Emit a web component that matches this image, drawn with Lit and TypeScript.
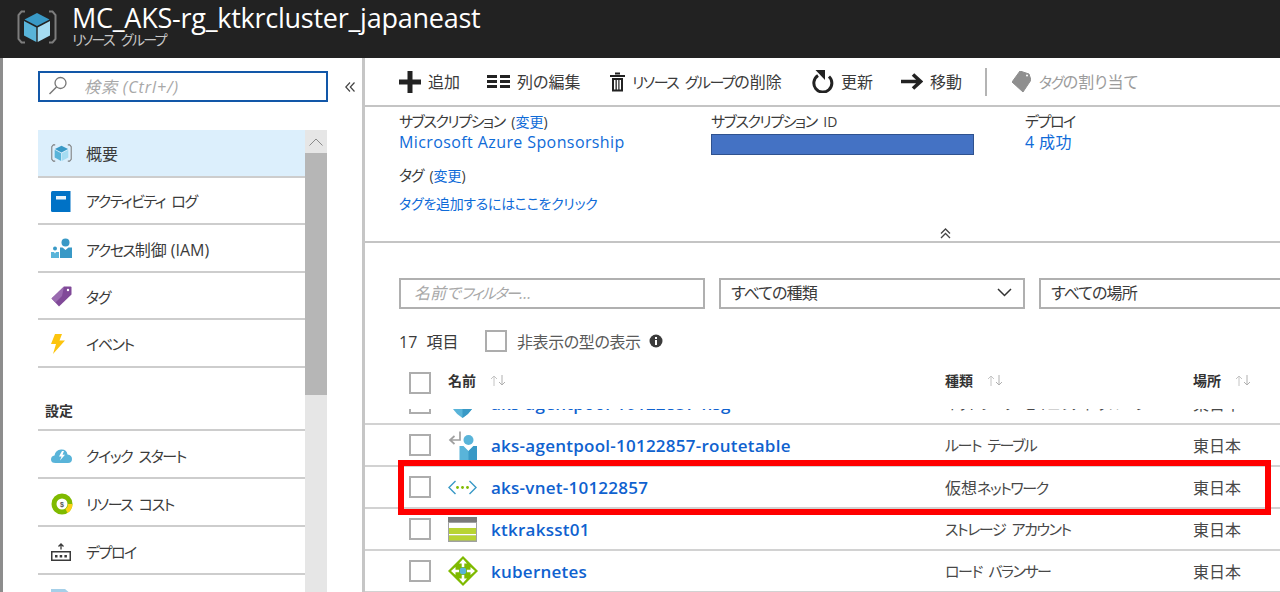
import { LitElement, html, css } from "lit";
import { customElement } from "lit/decorators.js";

const t = (s: string) =>
  s.split(/([\u30A0-\u30FF]+(?: [\u30A0-\u30FF]+)*)/).map((p, i) => (i % 2 ? html`<span class="k">${p}</span>` : p));

const cube = html`<svg viewBox="0 0 40 34" width="100%" height="100%">
  <path d="M8 1.500H4.500L1.500 5V29L4.500 32.500H8" fill="none" stroke="#7d7d7d" stroke-width="2"/>
  <path d="M32 1.500H35.500L38.500 5V29L35.500 32.500H32" fill="none" stroke="#7d7d7d" stroke-width="2"/>
  <path d="M20 3L32.500 9.500L20 16L7.500 9.500Z" fill="#3999c6"/>
  <path d="M7 11L19.300 17.500V32L7 25.500Z" fill="#59b4d9"/>
  <path d="M33 11L20.700 17.500V32L33 25.500Z" fill="#a5dcf2"/>
</svg>`;

const icons: Record<string, unknown> = {
  cube,
  book: html`<svg viewBox="0 0 20 21" width="20" height="21"><path d="M1.500 0H19.500V21H1.500Q0 21 0 19.500V1.500Q0 0 1.500 0Z" fill="#0072c6"/><rect x="5" y="5" width="10" height="3.500" fill="#e8f4fb"/></svg>`,
  iam: html`<svg viewBox="0 0 21 21" width="21" height="21"><circle cx="14.500" cy="4.500" r="4" fill="#3999c6"/><path d="M9 9.500H11.500L14.500 12L17.500 9.500H21V20H9Z" fill="#3999c6"/><circle cx="4" cy="10.500" r="2" fill="#3999c6"/><path d="M0 14H3L4 15.500L5 14H8V20H0Z" fill="#59b4d9"/></svg>`,
  tag: html`<svg viewBox="0 0 21 21" width="21" height="21"><path d="M13 0.500H19.500Q20.500 0.500 20.500 1.500V8.500L8 20.500L0.500 12.500Z" fill="#804998"/><path d="M13 0.500L0.500 12.500L4.500 16.500L11 10Z" fill="#9a6bb0"/><circle cx="17" cy="4" r="1.200" fill="#fff"/></svg>`,
  bolt: html`<svg viewBox="0 0 14 20" width="14" height="20"><path d="M4 0H11L8.500 6.500H14L2 20L5 10H0Z" fill="#fcc40e"/></svg>`,
  cloud: html`<svg viewBox="0 0 21 15" width="21" height="15"><path d="M4.500 15Q0 15 0 11.500Q0 8 3.500 7.500Q4.500 2 10 1.500Q15.500 1 16.500 6.500Q21 7 21 11Q21 15 17 15Z" fill="#59b4d9"/><path d="M11 3L8 8.500H10.500L9 12.500L14 6.800H11.500L13 3Z" fill="#fff"/></svg>`,
  cost: html`<svg viewBox="0 0 22 22" width="22" height="22"><circle cx="11" cy="11" r="8" fill="none" stroke="#7fba00" stroke-width="5"/><path d="M21.500 11A10.500 10.500 0 0 1 16.500 20L14.500 16A6 6 0 0 0 17 11Z" fill="#fcd116"/><text x="11" y="13.500" text-anchor="middle" font-size="7" font-weight="700" fill="#555" font-family="Liberation Sans">$</text></svg>`,
  deploy: html`<svg viewBox="0 0 20 18" width="20" height="18"><rect x="0.750" y="8.750" width="18.500" height="8.500" fill="none" stroke="#3a3a3a" stroke-width="1.500"/><rect x="4" y="12" width="2.500" height="2.500" fill="#3a3a3a"/><rect x="8.700" y="12" width="2.500" height="2.500" fill="#3a3a3a"/><rect x="13.400" y="12" width="2.500" height="2.500" fill="#3a3a3a"/><path d="M10 6.500V1M7.500 3.500L10 1L12.500 3.500" fill="none" stroke="#3a3a3a" stroke-width="1.300"/></svg>`,
  file: html`<svg viewBox="0 0 20 21" width="20" height="21"><path d="M0 0H14L20 5V21H0Z" fill="#a5cfe8"/></svg>`,
  plus: html`<svg viewBox="0 0 22 22" width="22" height="22"><path d="M8.500 0H13.500V8.500H22V13.500H13.500V22H8.500V13.500H0V8.500H8.500Z" fill="#222"/></svg>`,
  cols: html`<svg viewBox="0 0 23 13" width="23" height="13"><g fill="#222"><rect width="10" height="3"/><rect y="5" width="10" height="3"/><rect y="10" width="10" height="3"/><rect x="13" width="10" height="3"/><rect x="13" y="5" width="10" height="3"/><rect x="13" y="10" width="10" height="3"/></g></svg>`,
  trash: html`<svg viewBox="0 0 15 20" width="15" height="20"><path d="M5 1.500H10M0 4H15" stroke="#222" stroke-width="2" fill="none"/><path d="M2 6H13V19.500H2Z M4 8V17.500H5.500V8Z M6.800 8V17.500H8.300V8Z M9.500 8V17.500H11V8Z" fill="#222" fill-rule="evenodd"/></svg>`,
  refresh: html`<svg viewBox="0 0 22 23" width="22" height="23"><path d="M17 6.500A9 9 0 1 1 6 5.500" fill="none" stroke="#222" stroke-width="3"/><path d="M3.500 0H13V10Z" fill="#222"/></svg>`,
  arrow: html`<svg viewBox="0 0 22 17" width="22" height="17"><path d="M0 8.500H19M12 1.500L19.500 8.500L12 15.500" fill="none" stroke="#222" stroke-width="3.600"/></svg>`,
  grayTag: html`<svg viewBox="0 0 19 22" width="19" height="22"><path d="M8 0L17 3L19 9L11 21L0 11Z" fill="#8f8f8f" stroke="#8f8f8f" stroke-linejoin="round"/><circle cx="15" cy="4.500" r="1" fill="#fff"/></svg>`,
  shield: html`<svg viewBox="0 0 29 29" width="29" height="29"><path d="M2 0H27V10Q27 21 14.500 29Q2 21 2 10Z" fill="#59b4d9"/><path d="M14.500 0H27V10Q27 21 14.500 29Z" fill="#3999c6"/></svg>`,
  route: html`<svg viewBox="0 0 29 29" width="29" height="29"><path d="M12 0.500V9H2.500M6.500 5L2 9L6.500 13" fill="none" stroke="#a0a0a0" stroke-width="1.700"/><circle cx="20.500" cy="9" r="5" fill="#59b4d9"/><path d="M11.500 15H15.500L20.500 20L25.500 15H29V29H11.500Z" fill="#59b4d9"/><path d="M20.500 20L25.500 15H29V29H20.500Z" fill="#3999c6"/></svg>`,
  vnet: html`<svg viewBox="0 0 29 15" width="29" height="15"><path d="M7.500 1L1 7.500L7.500 14M21.500 1L28 7.500L21.500 14" fill="none" stroke="#3999c6" stroke-width="1.400"/><g fill="#7fba00"><circle cx="9.500" cy="7.500" r="1.400"/><circle cx="14.500" cy="7.500" r="1.400"/><circle cx="19.500" cy="7.500" r="1.400"/></g></svg>`,
  storage: html`<svg viewBox="0 0 29 25" width="29" height="25"><rect width="29" height="25" fill="#a0a1a2"/><rect width="29" height="5" fill="#7a7a7a"/><rect x="1" y="6" width="27" height="5" fill="#fff"/><rect x="1" y="11" width="27" height="6" fill="#b8d432"/><rect x="1" y="17" width="27" height="1.500" fill="#fff"/><rect x="1" y="18.500" width="27" height="5" fill="#b8d432"/></svg>`,
  lb: html`<svg viewBox="0 0 30 30" width="30" height="30"><path d="M15 0L30 15L15 30L0 15Z" fill="#7fba00"/><path d="M15 3L19 7.500H16.300V11H13.700V7.500H11Z M15 27L19 22.500H16.300V19H13.700V22.500H11Z M3 15L7.500 11V13.700H11V16.300H7.500V19Z M27 15L22.500 11V13.700H19V16.300H22.500V19Z" fill="#fff"/><circle cx="15" cy="15" r="3.400" fill="#59b4d9"/></svg>`,
};

const sortArrows = html`<svg class="sort" viewBox="0 0 17 11" width="17" height="11"><path d="M4 11V1M1 4L4 1L7 4" fill="none" stroke="#c4c4c4" stroke-width="1"/><path d="M12 0V10M9 7L12 10L15 7" fill="none" stroke="#b0b0b0" stroke-width="1"/></svg>`;

const nav1 = [
  ["cube", "概要", true],
  ["book", "アクティビティ ログ", false],
  ["iam", "アクセス制御 (IAM)", false],
  ["tag", "タグ", false],
  ["bolt", "イベント", false],
] as const;
const nav2 = [
  ["cloud", "クイック スタート"],
  ["cost", "リソース コスト"],
  ["deploy", "デプロイ"],
  ["file", ""],
] as const;
const tools = [
  ["plus", "追加"],
  ["cols", "列の編集"],
  ["trash", "リソース グループの削除"],
  ["refresh", "更新"],
  ["arrow", "移動"],
] as const;
const rows = [
  ["shield", "aks-agentpool-10122857-nsg", "ネットワーク セキュリティ グループ"],
  ["route", "aks-agentpool-10122857-routetable", "ルート テーブル"],
  ["vnet", "aks-vnet-10122857", "仮想ネットワーク"],
  ["storage", "ktkraksst01", "ストレージ アカウント"],
  ["lb", "kubernetes", "ロード バランサー"],
] as const;

@customElement("app-root")
export class AppRoot extends LitElement {
  static styles = css`
    :host {
      display: block;
      position: relative;
      width: 1280px;
      height: 592px;
      overflow: hidden;
      background: #fff;
      color: #3b3b3b;
      font-family: "Open Sans", "Noto Sans CJK JP", sans-serif;
      font-size: 16px;
      font-feature-settings: "palt";
    }
    * { box-sizing: border-box; }
    svg { display: block; flex: none; }
    a { color: #0f6bd8; text-decoration: none; }
    .k { font-size: 15px; letter-spacing: -1.45px; word-spacing: 4px; }

    .header {
      height: 58px;
      background: #222;
      color: #fff;
      display: flex;
      align-items: flex-start;
      padding: 10px 0 0 17px;
      gap: 15px;
    }
    .logo { width: 40px; height: 34px; }
    .titles { margin-top: -4px; }
    .title { font-size: 27px; line-height: 24px; letter-spacing: -0.25px; }
    .subtitle { font-size: 14px; line-height: 16px; margin-top: 2px; color: #c8c8c8; letter-spacing: -1.7px; word-spacing: 5px; }

    .body { display: flex; height: 534px; }
    .sidebar {
      width: 365px;
      flex: none;
      border-left: 3px solid #8d8d8d;
      border-right: 3px solid #c6c6c6;
      padding: 13px 0 0 35px;
    }
    .searchrow { display: flex; align-items: center; gap: 17px; }
    .search {
      width: 290px;
      height: 31px;
      border: 2px solid #1257a8;
      display: flex;
      align-items: center;
      padding: 0 0 2px 8px;
      gap: 16px;
      font-style: italic;
      color: #a8a8a8;
      letter-spacing: 0.9px;
    }
    .scroll { display: flex; margin-top: 28px; width: 289px; }
    .menu { width: 267px; flex: none; }
    .item {
      height: 47.6px;
      border-bottom: 2px solid #cdcdcd;
      display: flex;
      align-items: center;
      color: #3b3b3b;
      padding-top: 2px;
    }
    .item.sec2 { height: 48px; padding-top: 4px; }
    .item.active { background: #dceffc; padding-top: 1px; }
    .ico { width: 48px; padding-left: 13px; flex: none; display: flex; align-items: center; }
    .ico-cube { width: 21px; height: 18px; }
    .section {
      height: 63px;
      border-bottom: 2px solid #cdcdcd;
      display: flex;
      align-items: flex-end;
      padding: 0 0 9px 7px;
      font-size: 14px;
      font-weight: 700;
      color: #333;
    }
    .bar { width: 22px; flex: none; background: #e6e6e6; height: 462px; }
    .bar-up { height: 23px; display: flex; align-items: center; justify-content: center; }
    .thumb { height: 242px; background: #b6b6b6; }

    .main { flex: 1; min-width: 0; overflow: hidden; }
    .toolbar {
      height: 49px;
      border-bottom: 2px solid #c4c4c4;
      padding-left: 34px;
      display: grid;
      grid-template-columns: 88px 123px 202px 89px 84px 27px auto;
      align-items: center;
    }
    .tool { display: flex; align-items: center; gap: 7px; white-space: nowrap; }
    .tool span { margin-top: -2px; }
    .sep { width: 2px; height: 28px; background: #b4b4b4; }
    .tool.off { color: #9c9c9c; gap: 8px; }

    .essentials {
      height: 136px;
      border-bottom: 2px solid #c4c4c4;
      padding: 4px 0 0 34px;
      font-size: 14px;
    }
    .esgrid { display: grid; grid-template-columns: 312px 314px 1fr; }
    .label { height: 20px; line-height: 20px; white-space: nowrap; word-spacing: 3px; }
    .value { height: 23px; line-height: 22px; font-size: 16px; white-space: nowrap; letter-spacing: 0.4px; }
    .mask { width: 263px; height: 21px; margin-top: 3px; background: #4472c4; border: 1px solid #2f528f; }
    .tagrow { margin-top: 10px; }
    .taglink { margin-top: 9px; height: 20px; line-height: 20px; font-size: 14px; letter-spacing: -0.3px; }
    .chev { margin: 14px 0 0 541px; }

    .filters {
      margin-top: 35px;
      padding-left: 34px;
      display: grid;
      grid-template-columns: 306px 306px 306px;
      gap: 14px;
      width: 1000px;
    }
    .field {
      height: 31px;
      border: 2px solid #b0b0b0;
      display: flex;
      align-items: center;
      justify-content: space-between;
      padding: 0 11px 3px 10px;
      letter-spacing: -0.9px;
    }
    .field.ph { font-style: italic; color: #a8a8a8; padding-left: 13px; letter-spacing: 0; }
    .countrow {
      margin-top: 21px;
      padding-left: 34px;
      display: flex;
      align-items: center;
      height: 22px;
    }
    .count { width: 86px; word-spacing: 5px; }
    .check { width: 22px; height: 22px; border: 2px solid #adadad; background: #fff; flex: none; }
    .hidden-label { margin-left: 10px; color: #5a5a5a; margin-right: 8px; letter-spacing: -0.4px; }
    .thead {
      display: grid;
      grid-template-columns: 39px 497px 248px 1fr;
      margin: 18px 0 0 44px;
      align-items: center;
      height: 22px;
      font-size: 14px;
      font-weight: 700;
      color: #333;
    }
    .th { display: flex; align-items: center; gap: 14px; padding-bottom: 5px; }
    .rows { margin-top: 17px; height: 200px; overflow: hidden; }
    .rows-in { margin-top: -26px; }
    .row {
      display: grid;
      grid-template-columns: 39px 43px 454px 248px 1fr;
      align-items: center;
      height: 42px;
      border-bottom: 2px solid #d2d2d2;
      width: 915px;
      padding-left: 44px;
    }
    .cellico { display: flex; align-items: center; }
    .name { font-size: 17px; font-weight: 600; color: #0f62cf; white-space: nowrap; letter-spacing: 0.25px; }
    .type, .loc { color: #484848; white-space: nowrap; }

    .redbox {
      position: absolute;
      left: 398px;
      top: 460px;
      width: 873px;
      height: 55px;
      border: 6px solid #ff0000;
    }
  `;

  render() {
    return html`
      <div class="header">
        <div class="logo">${cube}</div>
        <div class="titles">
          <div class="title">MC_AKS-rg_ktkrcluster_japaneast</div>
          <div class="subtitle">リソース グループ</div>
        </div>
      </div>
      <div class="body">
        <div class="sidebar">
          <div class="searchrow">
            <div class="search">
              <svg viewBox="0 0 20 20" width="20" height="20"><circle cx="12.500" cy="7" r="5.500" fill="none" stroke="#777" stroke-width="1.300"/><path d="M8.500 11L1.500 18" stroke="#777" stroke-width="1.500"/></svg>
              <span>検索 (Ctrl+/)</span>
            </div>
            <svg viewBox="0 0 10 10" width="10" height="10"><path d="M5 0.500L0.800 5L5 9.500M9.500 0.500L5.300 5L9.500 9.500" fill="none" stroke="#444" stroke-width="1.200"/></svg>
          </div>
          <div class="scroll">
            <div class="menu">
              ${nav1.map(([i, s, a]) => html`<div class="item ${a ? "active" : ""}"><div class="ico">${i === "cube" ? html`<div class="ico-cube">${cube}</div>` : icons[i]}</div><span>${t(s)}</span></div>`)}
              <div class="section">設定</div>
              ${nav2.map(([i, s]) => html`<div class="item sec2"><div class="ico">${icons[i]}</div><span>${t(s)}</span></div>`)}
            </div>
            <div class="bar">
              <div class="bar-up"><svg viewBox="0 0 14 8" width="14" height="8"><path d="M0.500 7.500L7 1L13.500 7.500" fill="none" stroke="#8a8a8a" stroke-width="1"/></svg></div>
              <div class="thumb"></div>
            </div>
          </div>
        </div>
        <div class="main">
          <div class="toolbar">
            ${tools.map(([i, s]) => html`<div class="tool">${icons[i]}<span>${t(s)}</span></div>`)}
            <div class="sep"></div>
            <div class="tool off">${icons.grayTag}<span>${t("タグの割り当て")}</span></div>
          </div>
          <div class="essentials">
            <div class="esgrid">
              <div>
                <div class="label">${t("サブスクリプション")} (<a>変更</a>)</div>
                <div class="value"><a>Microsoft Azure Sponsorship</a></div>
              </div>
              <div>
                <div class="label">${t("サブスクリプション")} ID</div>
                <div class="mask"></div>
              </div>
              <div>
                <div class="label">${t("デプロイ")}</div>
                <div class="value"><a>4 成功</a></div>
              </div>
            </div>
            <div class="label tagrow">${t("タグ")} (<a>変更</a>)</div>
            <div class="taglink"><a>タグを追加するにはここをクリック</a></div>
            <svg class="chev" viewBox="0 0 11 11" width="11" height="11"><path d="M1 5.500L5.500 1L10 5.500M1 10L5.500 5.500L10 10" fill="none" stroke="#444" stroke-width="1.300"/></svg>
          </div>
          <div class="filters">
            <div class="field ph"><span>${t("名前でフィルター")}...</span></div>
            <div class="field"><span>すべての種類</span><svg viewBox="0 0 15 9" width="15" height="9"><path d="M1 1L7.500 7.500L14 1" fill="none" stroke="#333" stroke-width="1.500"/></svg></div>
            <div class="field"><span>すべての場所</span></div>
          </div>
          <div class="countrow">
            <span class="count">17 項目</span>
            <div class="check"></div>
            <span class="hidden-label">非表示の型の表示</span>
            <svg viewBox="0 0 14 14" width="14" height="14"><circle cx="7" cy="7" r="6.500" fill="#3b3b3b"/><rect x="6" y="6" width="2" height="5" fill="#fff"/><rect x="6" y="3" width="2" height="2" fill="#fff"/></svg>
          </div>
          <div class="thead">
            <div class="check"></div>
            <div class="th"><span>名前</span>${sortArrows}</div>
            <div class="th"><span>種類</span>${sortArrows}</div>
            <div class="th"><span>場所</span>${sortArrows}</div>
          </div>
          <div class="rows">
            <div class="rows-in">
              ${rows.map(([i, n, s]) => html`<div class="row">
                <div class="check"></div>
                <div class="cellico">${icons[i]}</div>
                <div class="name">${n}</div>
                <div class="type">${t(s)}</div>
                <div class="loc">東日本</div>
              </div>`)}
            </div>
          </div>
        </div>
      </div>
      <div class="redbox"></div>
    `;
  }
}
